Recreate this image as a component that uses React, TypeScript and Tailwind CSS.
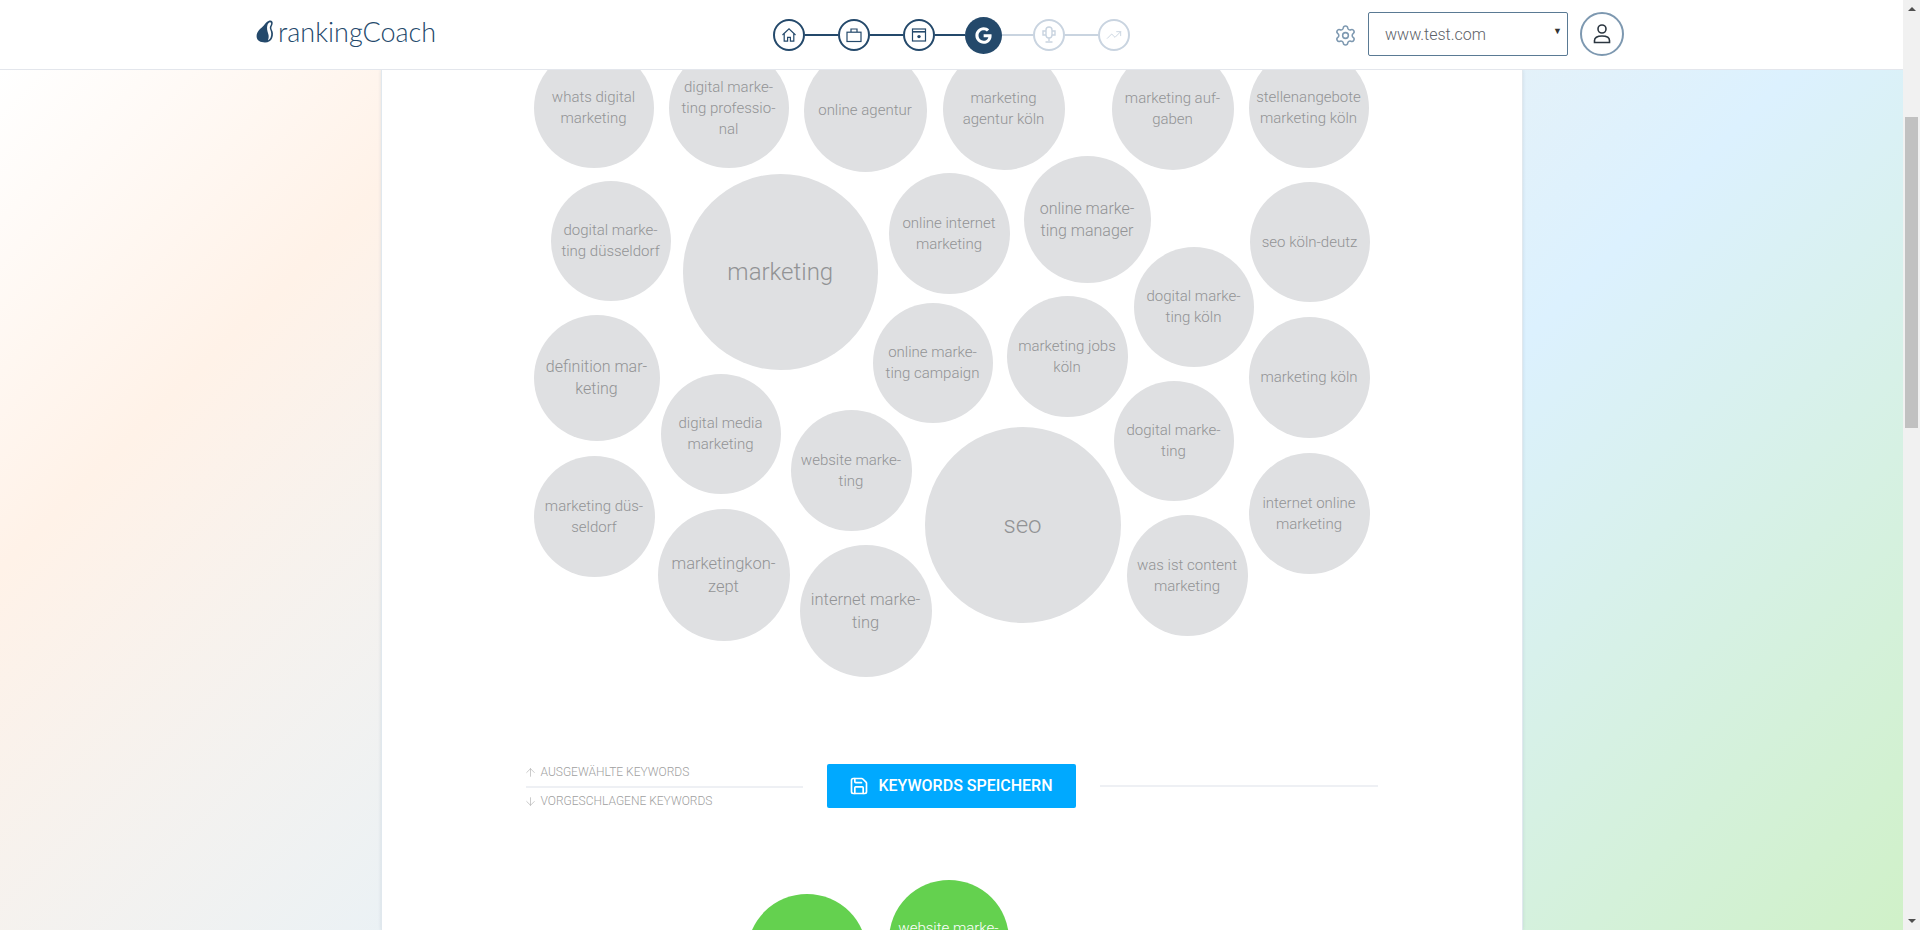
import { Settings, Save, ArrowUp, ArrowDown, TrendingUp } from "lucide-react";
import { FaGoogle } from "react-icons/fa";

interface Bubble {
  x: number;
  y: number;
  d: number;
  label: string;
  size: string;
}

const SM = "text-[15px] leading-[21px]";
const MD = "text-[16px] leading-[22px]";
const LG = "text-[16.5px] leading-[23px]";
const XL = "text-[24px] leading-[30px]";

// page coordinates of the keyword cloud
const BUBBLES: Bubble[] = [
  { x: 534, y: 48, d: 120, label: "whats digital\nmarketing", size: SM },
  { x: 669, y: 48, d: 120, label: "digital marke-\nting professio-\nnal", size: SM },
  { x: 804, y: 49, d: 123, label: "online agentur", size: SM },
  { x: 943, y: 48, d: 122, label: "marketing\nagentur köln", size: SM },
  { x: 1112, y: 48, d: 122, label: "marketing auf-\ngaben", size: SM },
  { x: 1249, y: 48, d: 120, label: "stellenangebote\nmarketing köln", size: SM },
  { x: 551, y: 181, d: 120, label: "dogital marke-\nting düsseldorf", size: SM },
  { x: 683, y: 174, d: 195.5, label: "marketing", size: XL },
  { x: 889, y: 173, d: 121, label: "online internet\nmarketing", size: SM },
  { x: 1024, y: 156, d: 127, label: "online marke-\nting manager", size: MD },
  { x: 1250, y: 182, d: 120, label: "seo köln-deutz", size: SM },
  { x: 1134, y: 247, d: 120, label: "dogital marke-\nting köln", size: SM },
  { x: 534, y: 315, d: 126, label: "definition mar-\nketing", size: MD },
  { x: 873, y: 303, d: 120, label: "online marke-\nting campaign", size: SM },
  { x: 1007, y: 296, d: 121, label: "marketing jobs\nköln", size: SM },
  { x: 1249, y: 317, d: 121, label: "marketing köln", size: SM },
  { x: 661, y: 374, d: 120, label: "digital media\nmarketing", size: SM },
  { x: 1114, y: 381, d: 120, label: "dogital marke-\nting", size: SM },
  { x: 791, y: 410, d: 121, label: "website marke-\nting", size: SM },
  { x: 925, y: 427, d: 196, label: "seo", size: XL },
  { x: 534, y: 456, d: 121, label: "marketing düs-\nseldorf", size: SM },
  { x: 1249, y: 453, d: 121, label: "internet online\nmarketing", size: SM },
  { x: 658, y: 509, d: 132, label: "marketingkon-\nzept", size: LG },
  { x: 1127, y: 515, d: 121, label: "was ist content\nmarketing", size: SM },
  { x: 800, y: 545, d: 132, label: "internet marke-\nting", size: LG },
];

function Logo() {
  return (
    <div className="flex items-center">
      <svg width="18" height="23" viewBox="0 0 18 23" className="mr-[4px]">
        <path
          d="M13 0.8C15.6 0 17.2 1.6 16.6 4C16.1 6 14.6 7.4 15.7 9.6C17.2 12.2 17.4 15 16.2 18C15 21 12.5 22.4 9 22.4C4.5 22.4 0.8 21 0.6 16.6C0.4 11 5 8.5 8 5.2C9.6 3.4 10.8 1.6 13 0.8Z"
          fill="#24496b"
        />
        <path
          d="M13.4 2.4C14.8 2 15.4 2.9 15 4.2C14.5 5.8 13.1 7 14.2 9.6C15.4 12.4 15.6 15 14.6 17.4C13.9 19 13 19.8 12 20.2C12.9 18 12.9 16 12.2 13.8C11.2 10.6 10.6 8 11.4 5.2C11.8 3.9 12.5 2.8 13.4 2.4Z"
          fill="#ffffff"
        />
      </svg>
      <span className="font-['Lato'] font-light text-[27px] leading-none text-[#24496b]">rankingCoach</span>
    </div>
  );
}

function StepCircle({ done, children }: { done: boolean; children: React.ReactNode }) {
  return (
    <div
      className={`w-[32px] h-[32px] rounded-full border-2 flex items-center justify-center shrink-0 bg-white ${
        done ? "border-[#24496b] text-[#24496b]" : "border-[#c9d4e0] text-[#c9d4e0]"
      }`}
    >
      {children}
    </div>
  );
}

function Connector({ done, w }: { done: boolean; w: string }) {
  return <div className={`h-[2px] shrink-0 ${w} ${done ? "bg-[#24496b]" : "bg-[#c9d4e0]"}`} />;
}

function Stepper() {
  return (
    <div className="flex items-center">
      <StepCircle done>
        <svg width="16" height="16" viewBox="0 0 16 16" fill="none" stroke="currentColor" strokeWidth="1.2">
          <path d="M1.5 8L8 1.8L14.5 8" />
          <path d="M3.2 6.8V14.2H6.6V10.4H9.4V14.2H12.8V6.8" />
        </svg>
      </StepCircle>
      <Connector done w="w-[33px]" />
      <StepCircle done>
        <svg width="16" height="16" viewBox="0 0 16 16" fill="none" stroke="currentColor" strokeWidth="1.2">
          <rect x="1" y="5.2" width="14" height="9.3" />
          <path d="M5 5V2H11V5" />
        </svg>
      </StepCircle>
      <Connector done w="w-[33px]" />
      <StepCircle done>
        <svg width="16" height="16" viewBox="0 0 16 16" fill="none" stroke="currentColor" strokeWidth="1.2">
          <rect x="1.5" y="2" width="13" height="12" />
          <path d="M1.5 4.8H14.5" strokeWidth="1.6" />
          <circle cx="8" cy="9.6" r="1.7" fill="currentColor" stroke="none" />
        </svg>
      </StepCircle>
      <Connector done w="w-[30px]" />
      <div className="w-[37px] h-[37px] rounded-full bg-[#24496b] flex items-center justify-center shrink-0 text-white">
        <FaGoogle size={17} />
      </div>
      <Connector done={false} w="w-[31px]" />
      <StepCircle done={false}>
        <svg width="16" height="18" viewBox="0 0 16 18" fill="none" stroke="currentColor" strokeWidth="1.4">
          <rect x="5" y="1" width="6" height="11" rx="3" />
          <path d="M5 5H2V9H5M11 5H14V9H11M8 12V15M4.5 16H11.5" />
        </svg>
      </StepCircle>
      <Connector done={false} w="w-[33px]" />
      <StepCircle done={false}>
        <TrendingUp size={16} strokeWidth={1.4} />
      </StepCircle>
    </div>
  );
}

function Header() {
  return (
    <header className="h-[70px] shrink-0 bg-white border-b border-[#e3e6ec] flex items-start">
      <div className="w-[773px] shrink-0 pl-[256px] pt-[18px]">
        <Logo />
      </div>
      <div className="w-[561px] shrink-0 pt-[16.5px]">
        <Stepper />
      </div>
      <div className="pt-[24px] w-[34px] shrink-0 text-[#7d98b0]">
        <Settings size={23} strokeWidth={1.6} />
      </div>
      <div className="mt-[12px] w-[200px] h-[44px] shrink-0 border border-[#5a7a94] rounded-[2px] flex items-center justify-between pl-[16px] pr-[5px] font-['Roboto'] font-light text-[16px] text-[#5d6268]">
        <span className="pt-[1px]">www.test.com</span>
        <span className="text-[9px] text-[#333] -mt-[4px]">▼</span>
      </div>
      <div className="mt-[12px] ml-[12px] w-[44px] h-[44px] shrink-0 rounded-full border-2 border-[#7d98b0] flex items-center justify-center text-[#2b3640]">
        <svg width="20" height="22" viewBox="0 0 20 22" fill="none" stroke="currentColor" strokeWidth="1.6">
          <circle cx="10" cy="6" r="4" />
          <path d="M2.5 19.5V17.5C2.5 14.8 5 13 10 13C15 13 17.5 14.8 17.5 17.5V19.5Z" />
        </svg>
      </div>
    </header>
  );
}

function Cloud() {
  return (
    <div className="relative shrink-0 ml-[152px] -mt-[22px] w-[836px] h-[629px]">
      {BUBBLES.map((b) => (
        <div
          key={b.label}
          className={`absolute rounded-full bg-[#dfe0e2] flex items-center justify-center text-center whitespace-pre-line font-['Roboto'] font-light text-[#929395] ${b.size}`}
          style={{ left: b.x - 534, top: b.y - 48, width: b.d, height: b.d }}
        >
          {b.label}
        </div>
      ))}
    </div>
  );
}

function SaveRow() {
  return (
    <div className="flex shrink-0 mt-[87px] ml-[144px] w-[852px] h-[44px] gap-[24px]">
      <div className="w-[277px] shrink-0 font-['Roboto'] font-light text-[12px] text-[#9f9f9f]">
        <div className="h-[16px] flex items-center">
          <ArrowUp size={13} strokeWidth={1} className="w-[15px] shrink-0 -ml-[3px] mr-[3px]" />
          <span>AUSGEWÄHLTE KEYWORDS</span>
        </div>
        <div className="h-[2px] mt-[6px] mb-[5px] bg-[#eef0f4]" />
        <div className="h-[16px] flex items-center">
          <ArrowDown size={13} strokeWidth={1} className="w-[15px] shrink-0 -ml-[3px] mr-[3px]" />
          <span>VORGESCHLAGENE KEYWORDS</span>
        </div>
      </div>
      <button className="w-[249px] shrink-0 h-[44px] rounded-[2px] bg-[#00a9ff] text-white flex items-center justify-center gap-[9px] font-['Roboto'] font-medium text-[16px]">
        <Save size={20} strokeWidth={2} />
        KEYWORDS SPEICHERN
      </button>
      <div className="flex-1 h-[2px] self-center bg-[#eef0f4]" />
    </div>
  );
}

function SelectedCloud() {
  return (
    <div className="relative shrink-0 ml-[152px] mt-[72px] w-[836px] h-[200px] font-['Roboto'] font-light text-white text-[15px] leading-[21px] text-center">
      <div className="absolute left-[213px] top-[14px] w-[120px] h-[120px] rounded-full bg-[#64d14f]" />
      <div className="absolute left-[355px] top-0 w-[120px] h-[120px] rounded-full bg-[#64d14f] flex items-center justify-center pb-[3px]">
        website marke-
        <br />
        ting
      </div>
    </div>
  );
}

function Scrollbar() {
  return (
    <div className="w-[17px] h-full shrink-0 bg-[#f1f1f1] flex flex-col items-center relative">
      <div className="mt-[7px] w-0 h-0 border-x-[4px] border-x-transparent border-b-[4px] border-b-[#505050]" />
      <div className="absolute top-[117px] left-[2px] w-[13px] h-[311px] bg-[#c1c1c1]" />
      <div className="mt-auto mb-[7px] w-0 h-0 border-x-[4px] border-x-transparent border-t-[4px] border-t-[#505050]" />
    </div>
  );
}

export default function App() {
  return (
    <div className="h-[930px] flex overflow-hidden bg-white">
      <div className="flex-1 min-w-0 flex flex-col">
        <Header />
        <main className="flex-1 min-h-0 overflow-hidden bg-[linear-gradient(135deg,#ffffff_0%,#fff2e8_18%,#dcf1fe_65%,#d0f1c8_100%)]">
          <div className="w-[1142px] h-full mx-auto flex flex-col bg-white border-x border-[#e0e8ee] shadow-[0_0_3px_rgba(150,170,190,0.3)]">
            <Cloud />
            <SaveRow />
            <SelectedCloud />
          </div>
        </main>
      </div>
      <Scrollbar />
    </div>
  );
}
